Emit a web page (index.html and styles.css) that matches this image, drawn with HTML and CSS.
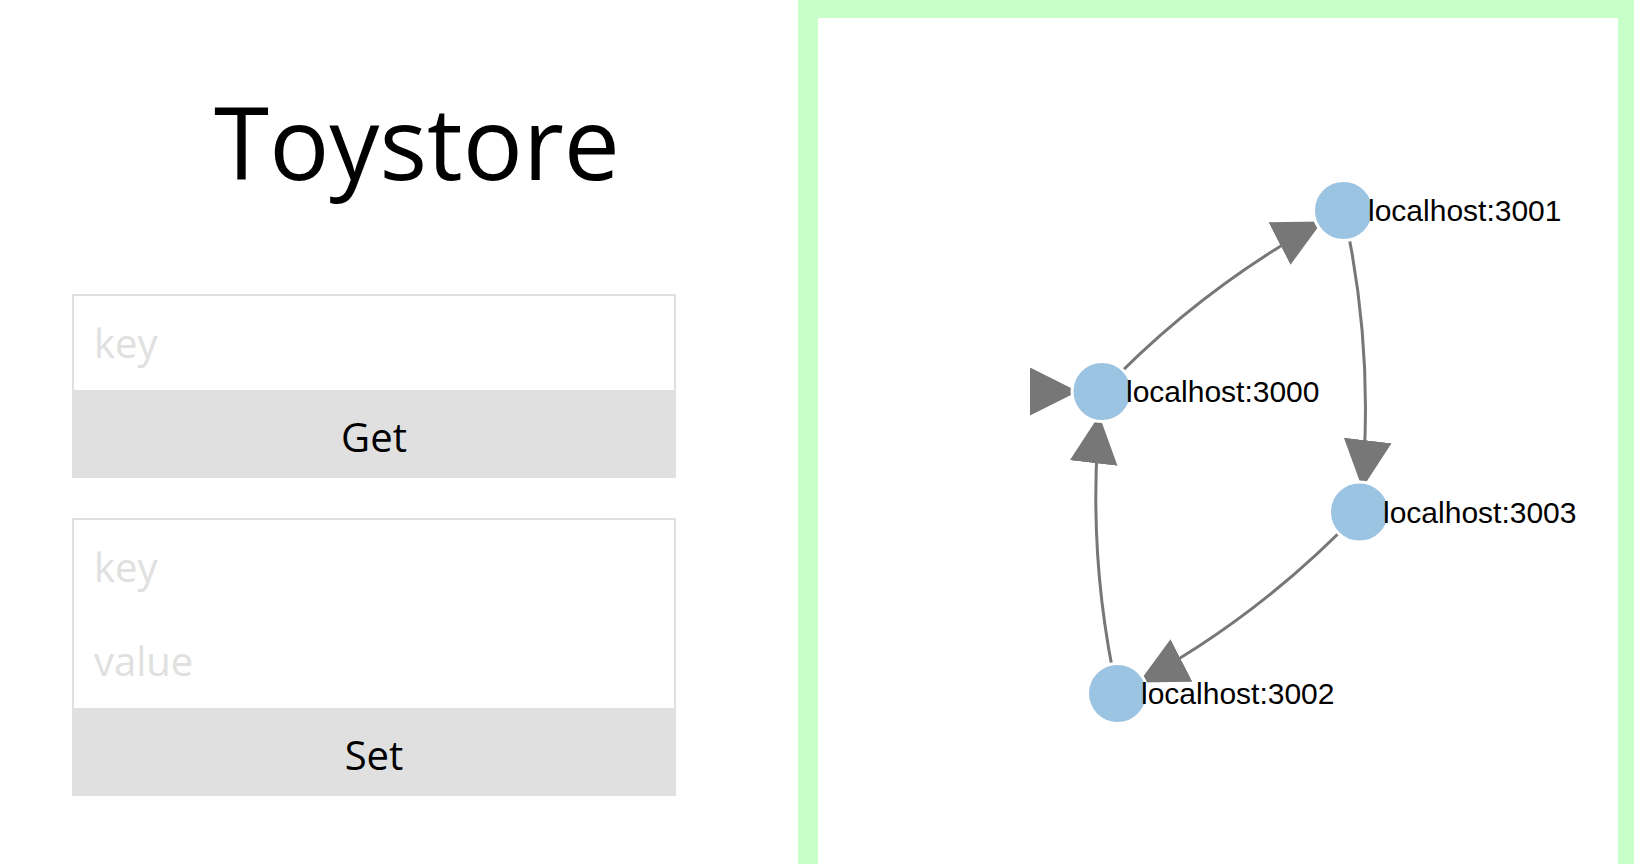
FILE: index.html
```html
<!DOCTYPE html>
<html lang="en">
<head>
<meta charset="utf-8">
<title>Toystore</title>
<link rel="stylesheet" href="styles.css">
</head>
<body>
<main class="page">
  <section class="store">
    <h1 class="title">Toystore</h1>
    <form class="card">
      <input class="field" type="text" placeholder="key" aria-label="key to get">
      <button class="action" type="button">Get</button>
    </form>
    <form class="card">
      <input class="field" type="text" placeholder="key" aria-label="key to set">
      <input class="field" type="text" placeholder="value" aria-label="value to set">
      <button class="action" type="button">Set</button>
    </form>
  </section>
  <section class="ring">
    <svg class="graph" viewBox="0 0 800 846" preserveAspectRatio="xMidYMin meet" role="img" aria-label="Node ring">
      <defs>
        <marker id="arrow" viewBox="0 -5 10 10" refX="15" refY="0" markerWidth="48" markerHeight="48" markerUnits="userSpaceOnUse" orient="auto">
          <path class="head" d="M0,-5L10,0L0,5"/>
        </marker>
      </defs>
      <g class="links">
        <path d="M283.5,373.5L284,373.5"/>
        <path d="M284,373.5A906,906 0 0,1 525.5,192.5"/>
        <path d="M525.5,192.5A906,906 0 0,1 541.5,494"/>
        <path d="M541.5,494A906,906 0 0,1 299.5,675.5"/>
        <path d="M299.5,675.5A906,906 0 0,1 284,373.5"/>
      </g>
      <g class="nodes">
        <circle cx="284" cy="373.5" r="30"/>
        <circle cx="525.5" cy="192.5" r="30"/>
        <circle cx="541.5" cy="494" r="30"/>
        <circle cx="299.5" cy="675.5" r="30"/>
      </g>
      <g class="labels">
        <text x="308" y="384">localhost:3000</text>
        <text x="550" y="203">localhost:3001</text>
        <text x="565" y="505">localhost:3003</text>
        <text x="323" y="686">localhost:3002</text>
      </g>
    </svg>
  </section>
</main>
</body>
</html>
```

FILE: styles.css
```css
* { box-sizing: border-box; }

body {
  margin: 0;
  background: #fff;
  color: #000;
  font-family: "Open Sans", sans-serif;
}

.page {
  display: grid;
  grid-template-columns: 798fr 836fr;
  height: 100vh;
  overflow: hidden;
}

.store {
  display: flex;
  flex-direction: column;
  gap: 40px;
  padding: 73px 122px 0 72px;
}

.title {
  margin: 0 0 45px;
  padding-left: 86px;
  font-size: 100px;
  font-weight: 400;
  line-height: 136px;
  text-align: center;
}

.card {
  display: flex;
  flex-direction: column;
  border: 2px solid #e0e0e0;
}

.field,
.action {
  width: 100%;
  border: 0;
  font-family: inherit;
  font-size: 40px;
}

.field {
  height: 94px;
  padding: 0 20px 2px;
  background: transparent;
  color: #000;
}

.field::placeholder {
  color: #e0e0e0;
  opacity: 1;
}

.action {
  height: 86px;
  padding: 6px 0 0;
  background: #e0e0e0;
  color: #000;
}

.ring {
  min-width: 0;
  border: solid #c8ffc8;
  border-width: 18px 16px 0 20px;
}

.graph {
  display: block;
  width: 100%;
  height: 100%;
}

.head { fill: #777; }

.links > path {
  fill: none;
  stroke: #777;
  stroke-width: 3px;
  marker-end: url(#arrow);
}

.nodes circle {
  fill: #9bc3e2;
  stroke: #fff;
  stroke-width: 3px;
}

.labels text {
  font-family: "Liberation Sans", Arial, sans-serif;
  font-size: 30px;
}
```
